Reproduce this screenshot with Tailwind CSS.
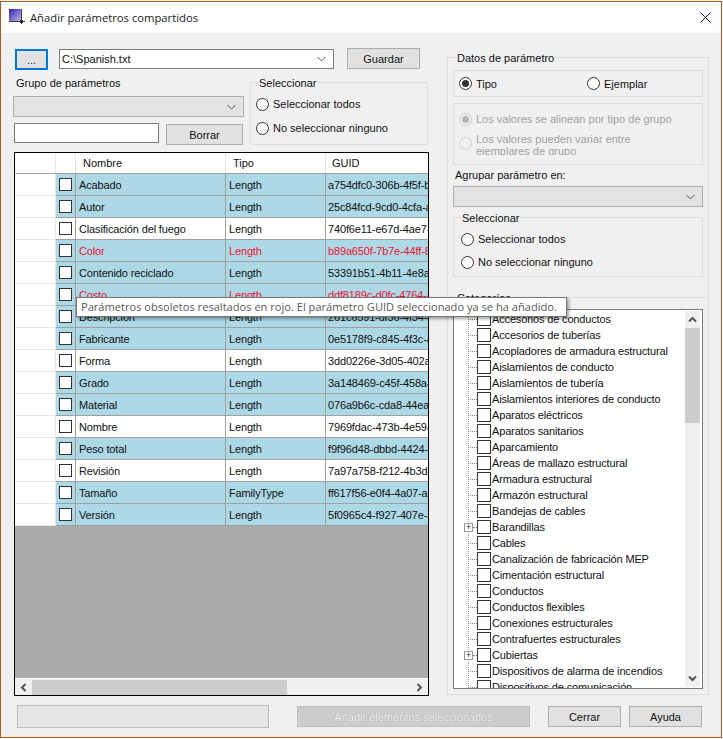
<!DOCTYPE html>
<html lang="es"><head><meta charset="utf-8"><title>Añadir parámetros compartidos</title>
<script src="https://cdn.jsdelivr.net/npm/@tailwindcss/browser@4"></script></head>
<body class="bg-white overflow-hidden">
<div class="relative mt-px w-[722px] h-[737px] border border-[#b5561c] bg-[#f0f0f0] text-[11px] leading-[14px] text-[#111] font-['Liberation_Sans',sans-serif] overflow-hidden">
  <!-- title bar -->
  <div class="h-[31px] bg-white flex items-center pl-[8px] pr-[8px]">
    <svg width="16" height="15" viewBox="0 0 16 15" class="shrink-0 -mt-[2px]"><defs><linearGradient id="g" x1="0" y1="0" x2="1" y2="1"><stop offset="0" stop-color="#2d1fa8"/><stop offset="1" stop-color="#cfc4f5"/></linearGradient></defs><rect x="0" y="0" width="13" height="13" fill="url(#g)"/><path d="M0 12.500H16M12.500 0V15" stroke="#444" stroke-width="1"/><rect x="11" y="11" width="3" height="3" fill="#222"/></svg>
    <span class="ml-[5px] font-['Open_Sans',sans-serif] text-[11.25px] text-[#222]">Añadir parámetros compartidos</span>
    <svg width="11" height="11" viewBox="0 0 11 11" class="ml-auto mr-[2px]"><path d="M0.500 0.500L10.500 10.500M10.500 0.500L0.500 10.500" stroke="#222" stroke-width="1"/></svg>
  </div>
  <div class="flex pt-[16px]">
    <!-- left column -->
    <div class="w-[446px] shrink-0">
      <div class="flex h-[21px] pl-[14px] items-start">
        <div class="w-[33px] h-[21px] border-2 border-[#0078d7] bg-[#e1e1e1] flex justify-center items-center">...</div>
        <div class="ml-[11px] w-[275px] h-[20px] border border-[#7a7a7a] bg-white flex items-center pl-[2px] pr-[7px] justify-between"><span>C:\Spanish.txt</span><svg width="9" height="6" viewBox="0 0 9 6"><path d="M0.500 1L4.500 5L8.500 1" fill="none" stroke="#555"/></svg></div>
        <div class="ml-[13px] -mt-px w-[73px] h-[21px] border border-[#adadad] bg-[#e1e1e1] flex justify-center items-center">Guardar</div>
      </div>
      <div class="flex mt-[12px] pl-[12px] items-start">
        <div class="w-[231px] -mt-[6px]">
          <div class="pl-[3px] h-[15px]">Grupo de parámetros</div>
          <div class="h-[21px] mt-[5px] border border-[#adadad] bg-[#e3e3e3] flex items-center justify-end pr-[7px]"><svg width="9" height="6" viewBox="0 0 9 6"><path d="M0.500 1L4.500 5L8.500 1" fill="none" stroke="#555"/></svg></div>
          <div class="flex mt-[6px] items-start">
            <div class="ml-px w-[145px] h-[20px] border border-[#7a7a7a] bg-white"></div>
            <div class="ml-[7px] mt-px w-[77px] h-[21px] border border-[#adadad] bg-[#e1e1e1] flex justify-center items-center">Borrar</div>
          </div>
        </div>
        <div class="relative ml-[6px] w-[178px] h-[63px] border border-[#dcdcdc]">
          <span class="absolute left-[7px] -top-[7px] bg-[#f0f0f0] px-px">Seleccionar</span>
          <div class="flex items-center pl-[5px] mt-[14px] h-[14px]"><span class="w-[13px] h-[13px] rounded-full border border-[#333] bg-white"></span><span class="ml-[4px]">Seleccionar todos</span></div>
          <div class="flex items-center pl-[5px] mt-[10px] h-[14px]"><span class="w-[13px] h-[13px] rounded-full border border-[#333] bg-white"></span><span class="ml-[4px]">No seleccionar ninguno</span></div>
        </div>
      </div>
      <!-- grid -->
      <div class="ml-[13px] mt-[7px] w-[415px] h-[544px] border border-black flex flex-col bg-[#ababab] overflow-hidden">
        <div class="h-[21px] bg-white grid grid-cols-[40px_20px_150px_100px_102px] shrink-0 border-l border-white border-b border-b-[#a0a0a0] *:flex *:items-center">
          <div class="border-r border-[#e4e4e4]"></div><div class="border-r border-[#e4e4e4]"></div>
          <div class="border-r border-[#e4e4e4] pl-[7px]">Nombre</div><div class="border-r border-[#e4e4e4] pl-[7px]">Tipo</div><div class="pl-[6px]">GUID</div>
        </div>
        <div class="shrink-0 tracking-[-0.15px]">
          <div class="h-[22px] bg-[#add8e6] grid grid-cols-[40px_20px_150px_100px_102px] border-l border-white *:flex *:items-center *:border-b *:border-r *:border-[#a0a0a0] *:overflow-hidden *:whitespace-nowrap"><div class="bg-white !border-[#e6e6e6]"></div><div class="justify-center"><span class="w-[13px] h-[13px] border border-[#333] bg-white shrink-0"></span></div><div class="pl-[3px]">Acabado</div><div class="pl-[3px]">Length</div><div class="pl-[2px] !border-r-0">a754dfc0-306b-4f5f-b</div></div>
          <div class="h-[22px] bg-[#add8e6] grid grid-cols-[40px_20px_150px_100px_102px] border-l border-white *:flex *:items-center *:border-b *:border-r *:border-[#a0a0a0] *:overflow-hidden *:whitespace-nowrap"><div class="bg-white !border-[#e6e6e6]"></div><div class="justify-center"><span class="w-[13px] h-[13px] border border-[#333] bg-white shrink-0"></span></div><div class="pl-[3px]">Autor</div><div class="pl-[3px]">Length</div><div class="pl-[2px] !border-r-0">25c84fcd-9cd0-4cfa-a</div></div>
          <div class="h-[22px] bg-white grid grid-cols-[40px_20px_150px_100px_102px] border-l border-white *:flex *:items-center *:border-b *:border-r *:border-[#a0a0a0] *:overflow-hidden *:whitespace-nowrap"><div class="bg-white !border-[#e6e6e6]"></div><div class="justify-center"><span class="w-[13px] h-[13px] border border-[#333] bg-white shrink-0"></span></div><div class="pl-[3px]">Clasificación del fuego</div><div class="pl-[3px]">Length</div><div class="pl-[2px] !border-r-0">740f6e11-e67d-4ae7-a</div></div>
          <div class="h-[22px] bg-[#add8e6] text-[#f01030] grid grid-cols-[40px_20px_150px_100px_102px] border-l border-white *:flex *:items-center *:border-b *:border-r *:border-[#a0a0a0] *:overflow-hidden *:whitespace-nowrap"><div class="bg-white !border-[#e6e6e6]"></div><div class="justify-center"><span class="w-[13px] h-[13px] border border-[#333] bg-white shrink-0"></span></div><div class="pl-[3px]">Color</div><div class="pl-[3px]">Length</div><div class="pl-[2px] !border-r-0">b89a650f-7b7e-44ff-8</div></div>
          <div class="h-[22px] bg-[#add8e6] grid grid-cols-[40px_20px_150px_100px_102px] border-l border-white *:flex *:items-center *:border-b *:border-r *:border-[#a0a0a0] *:overflow-hidden *:whitespace-nowrap"><div class="bg-white !border-[#e6e6e6]"></div><div class="justify-center"><span class="w-[13px] h-[13px] border border-[#333] bg-white shrink-0"></span></div><div class="pl-[3px]">Contenido reciclado</div><div class="pl-[3px]">Length</div><div class="pl-[2px] !border-r-0">53391b51-4b11-4e8a-a</div></div>
          <div class="h-[22px] bg-[#add8e6] text-[#f01030] grid grid-cols-[40px_20px_150px_100px_102px] border-l border-white *:flex *:items-center *:border-b *:border-r *:border-[#a0a0a0] *:overflow-hidden *:whitespace-nowrap"><div class="bg-white !border-[#e6e6e6]"></div><div class="justify-center"><span class="w-[13px] h-[13px] border border-[#333] bg-white shrink-0"></span></div><div class="pl-[3px]">Costo</div><div class="pl-[3px]">Length</div><div class="pl-[2px] !border-r-0">ddf8189c-d0fc-4764-a</div></div>
          <div class="h-[22px] bg-[#add8e6] grid grid-cols-[40px_20px_150px_100px_102px] border-l border-white *:flex *:items-center *:border-b *:border-r *:border-[#a0a0a0] *:overflow-hidden *:whitespace-nowrap"><div class="bg-white !border-[#e6e6e6]"></div><div class="justify-center"><span class="w-[13px] h-[13px] border border-[#333] bg-white shrink-0"></span></div><div class="pl-[3px]">Descripción</div><div class="pl-[3px]">Length</div><div class="pl-[2px] !border-r-0">261c6591-df36-4f34-a</div></div>
          <div class="h-[22px] bg-[#add8e6] grid grid-cols-[40px_20px_150px_100px_102px] border-l border-white *:flex *:items-center *:border-b *:border-r *:border-[#a0a0a0] *:overflow-hidden *:whitespace-nowrap"><div class="bg-white !border-[#e6e6e6]"></div><div class="justify-center"><span class="w-[13px] h-[13px] border border-[#333] bg-white shrink-0"></span></div><div class="pl-[3px]">Fabricante</div><div class="pl-[3px]">Length</div><div class="pl-[2px] !border-r-0">0e5178f9-c845-4f3c-a</div></div>
          <div class="h-[22px] bg-white grid grid-cols-[40px_20px_150px_100px_102px] border-l border-white *:flex *:items-center *:border-b *:border-r *:border-[#a0a0a0] *:overflow-hidden *:whitespace-nowrap"><div class="bg-white !border-[#e6e6e6]"></div><div class="justify-center"><span class="w-[13px] h-[13px] border border-[#333] bg-white shrink-0"></span></div><div class="pl-[3px]">Forma</div><div class="pl-[3px]">Length</div><div class="pl-[2px] !border-r-0">3dd0226e-3d05-402a-a</div></div>
          <div class="h-[22px] bg-[#add8e6] grid grid-cols-[40px_20px_150px_100px_102px] border-l border-white *:flex *:items-center *:border-b *:border-r *:border-[#a0a0a0] *:overflow-hidden *:whitespace-nowrap"><div class="bg-white !border-[#e6e6e6]"></div><div class="justify-center"><span class="w-[13px] h-[13px] border border-[#333] bg-white shrink-0"></span></div><div class="pl-[3px]">Grado</div><div class="pl-[3px]">Length</div><div class="pl-[2px] !border-r-0">3a148469-c45f-458a-a</div></div>
          <div class="h-[22px] bg-[#add8e6] grid grid-cols-[40px_20px_150px_100px_102px] border-l border-white *:flex *:items-center *:border-b *:border-r *:border-[#a0a0a0] *:overflow-hidden *:whitespace-nowrap"><div class="bg-white !border-[#e6e6e6]"></div><div class="justify-center"><span class="w-[13px] h-[13px] border border-[#333] bg-white shrink-0"></span></div><div class="pl-[3px]">Material</div><div class="pl-[3px]">Length</div><div class="pl-[2px] !border-r-0">076a9b6c-cda8-44ea-a</div></div>
          <div class="h-[22px] bg-white grid grid-cols-[40px_20px_150px_100px_102px] border-l border-white *:flex *:items-center *:border-b *:border-r *:border-[#a0a0a0] *:overflow-hidden *:whitespace-nowrap"><div class="bg-white !border-[#e6e6e6]"></div><div class="justify-center"><span class="w-[13px] h-[13px] border border-[#333] bg-white shrink-0"></span></div><div class="pl-[3px]">Nombre</div><div class="pl-[3px]">Length</div><div class="pl-[2px] !border-r-0">7969fdac-473b-4e59-a</div></div>
          <div class="h-[22px] bg-[#add8e6] grid grid-cols-[40px_20px_150px_100px_102px] border-l border-white *:flex *:items-center *:border-b *:border-r *:border-[#a0a0a0] *:overflow-hidden *:whitespace-nowrap"><div class="bg-white !border-[#e6e6e6]"></div><div class="justify-center"><span class="w-[13px] h-[13px] border border-[#333] bg-white shrink-0"></span></div><div class="pl-[3px]">Peso total</div><div class="pl-[3px]">Length</div><div class="pl-[2px] !border-r-0">f9f96d48-dbbd-4424-a</div></div>
          <div class="h-[22px] bg-white grid grid-cols-[40px_20px_150px_100px_102px] border-l border-white *:flex *:items-center *:border-b *:border-r *:border-[#a0a0a0] *:overflow-hidden *:whitespace-nowrap"><div class="bg-white !border-[#e6e6e6]"></div><div class="justify-center"><span class="w-[13px] h-[13px] border border-[#333] bg-white shrink-0"></span></div><div class="pl-[3px]">Revisión</div><div class="pl-[3px]">Length</div><div class="pl-[2px] !border-r-0">7a97a758-f212-4b3d-a</div></div>
          <div class="h-[22px] bg-[#add8e6] grid grid-cols-[40px_20px_150px_100px_102px] border-l border-white *:flex *:items-center *:border-b *:border-r *:border-[#a0a0a0] *:overflow-hidden *:whitespace-nowrap"><div class="bg-white !border-[#e6e6e6]"></div><div class="justify-center"><span class="w-[13px] h-[13px] border border-[#333] bg-white shrink-0"></span></div><div class="pl-[3px]">Tamaño</div><div class="pl-[3px]">FamilyType</div><div class="pl-[2px] !border-r-0">ff617f56-e0f4-4a07-a</div></div>
          <div class="h-[22px] bg-[#add8e6] grid grid-cols-[40px_20px_150px_100px_102px] border-l border-white *:flex *:items-center *:border-b *:border-r *:border-[#a0a0a0] *:overflow-hidden *:whitespace-nowrap"><div class="bg-white !border-[#e6e6e6]"></div><div class="justify-center"><span class="w-[13px] h-[13px] border border-[#333] bg-white shrink-0"></span></div><div class="pl-[3px]">Versión</div><div class="pl-[3px]">Length</div><div class="pl-[2px] !border-r-0">5f0965c4-f927-407e-a</div></div>
        </div>
        <div class="flex-1"></div>
        <div class="h-[17px] shrink-0 bg-[#f0f0f0] border-t border-white flex items-center">
          <div class="w-[17px] flex justify-center"><svg width="7" height="9" viewBox="0 0 7 9"><path d="M5.500 1L2 4.500L5.500 8" fill="none" stroke="#555" stroke-width="2"/></svg></div>
          <div class="w-[255px] h-[15px] bg-[#cdcdcd]"></div>
          <div class="ml-auto w-[17px] flex justify-center"><svg width="7" height="9" viewBox="0 0 7 9"><path d="M1.500 1L5 4.500L1.500 8" fill="none" stroke="#555" stroke-width="2"/></svg></div>
        </div>
      </div>
    </div>
    <!-- right column -->
    <div class="w-[262px] shrink-0 mt-[8px]">
      <div class="relative h-[240px] border border-[#dcdcdc] border-b-0 px-[5px] pt-[12px]">
        <span class="absolute left-[8px] -top-[7px] bg-[#f0f0f0] px-px">Datos de parámetro</span>
        <div class="h-[27px] border border-[#dcdcdc] flex items-center pl-[5px]"><span class="w-[13px] h-[13px] rounded-full border border-[#333] bg-white flex items-center justify-center"><span class="w-[7px] h-[7px] rounded-full bg-[#333]"></span></span><span class="ml-[4px] w-[20px]">Tipo</span><span class="ml-[91px] w-[13px] h-[13px] rounded-full border border-[#333] bg-white"></span><span class="ml-[4px]">Ejemplar</span></div>
        <div class="mt-[6px] h-[62px] border border-[#dcdcdc] text-[#a0a0a0] pl-[5px] overflow-hidden">
          <div class="flex items-center h-[14px] mt-[8px]"><span class="w-[13px] h-[13px] rounded-full border border-[#cfcfcf] bg-[#f0f0f0] flex items-center justify-center"><span class="w-[7px] h-[7px] rounded-full bg-[#b5b5b5]"></span></span><span class="ml-[4px]">Los valores se alinean por tipo de grupo</span></div>
          <div class="flex items-start mt-[7px] h-[22px]"><span class="mt-[4px] w-[13px] h-[13px] rounded-full border border-[#cfcfcf] bg-[#f0f0f0] shrink-0"></span><span class="ml-[4px] leading-[12px] h-[22px] overflow-hidden">Los valores pueden variar entre<br>ejemplares de grupo</span></div>
        </div>
        <div class="mt-[3px] h-[15px] pl-[2px]">Agrupar parámetro en:</div>
        <div class="mt-[3px] h-[21px] border border-[#adadad] bg-[#e3e3e3] flex items-center justify-end pr-[7px]"><svg width="9" height="6" viewBox="0 0 9 6"><path d="M0.500 1L4.500 5L8.500 1" fill="none" stroke="#555"/></svg></div>
        <div class="relative mt-[10px] h-[60px] border border-[#dcdcdc]">
          <span class="absolute left-[7px] -top-[7px] bg-[#f0f0f0] px-px">Seleccionar</span>
          <div class="flex items-center pl-[7px] mt-[14px] h-[14px]"><span class="w-[13px] h-[13px] rounded-full border border-[#333] bg-white"></span><span class="ml-[4px]">Seleccionar todos</span></div>
          <div class="flex items-center pl-[7px] mt-[9px] h-[14px]"><span class="w-[13px] h-[13px] rounded-full border border-[#333] bg-white"></span><span class="ml-[4px]">No seleccionar ninguno</span></div>
        </div>
      </div>
      <div class="relative border border-[#dcdcdc] h-[398px] px-[5px] pt-[11px]">
        <span class="absolute left-[8px] -top-[7px] bg-[#f0f0f0] px-px">Categorías</span>
        <div class="h-[380px] border border-[#7a7a7a] bg-white flex overflow-hidden">
          <div class="relative flex-1 mt-[1px] overflow-hidden whitespace-nowrap tracking-[-0.15px]">
            <div class="absolute left-[14px] top-0 bottom-0 border-l border-dotted border-[#999]"></div>
            <div class="relative h-[16px] flex items-center"><span class="w-[9px] ml-[14px] border-t border-dotted border-[#888]"></span><span class="w-[14px] h-[14px] border border-[#333]"></span><span class="ml-[1px]">Accesorios de conductos</span></div>
            <div class="relative h-[16px] flex items-center"><span class="w-[9px] ml-[14px] border-t border-dotted border-[#888]"></span><span class="w-[14px] h-[14px] border border-[#333]"></span><span class="ml-[1px]">Accesorios de tuberías</span></div>
            <div class="relative h-[16px] flex items-center"><span class="w-[9px] ml-[14px] border-t border-dotted border-[#888]"></span><span class="w-[14px] h-[14px] border border-[#333]"></span><span class="ml-[1px]">Acopladores de armadura estructural</span></div>
            <div class="relative h-[16px] flex items-center"><span class="w-[9px] ml-[14px] border-t border-dotted border-[#888]"></span><span class="w-[14px] h-[14px] border border-[#333]"></span><span class="ml-[1px]">Aislamientos de conducto</span></div>
            <div class="relative h-[16px] flex items-center"><span class="w-[9px] ml-[14px] border-t border-dotted border-[#888]"></span><span class="w-[14px] h-[14px] border border-[#333]"></span><span class="ml-[1px]">Aislamientos de tubería</span></div>
            <div class="relative h-[16px] flex items-center"><span class="w-[9px] ml-[14px] border-t border-dotted border-[#888]"></span><span class="w-[14px] h-[14px] border border-[#333]"></span><span class="ml-[1px]">Aislamientos interiores de conducto</span></div>
            <div class="relative h-[16px] flex items-center"><span class="w-[9px] ml-[14px] border-t border-dotted border-[#888]"></span><span class="w-[14px] h-[14px] border border-[#333]"></span><span class="ml-[1px]">Aparatos eléctricos</span></div>
            <div class="relative h-[16px] flex items-center"><span class="w-[9px] ml-[14px] border-t border-dotted border-[#888]"></span><span class="w-[14px] h-[14px] border border-[#333]"></span><span class="ml-[1px]">Aparatos sanitarios</span></div>
            <div class="relative h-[16px] flex items-center"><span class="w-[9px] ml-[14px] border-t border-dotted border-[#888]"></span><span class="w-[14px] h-[14px] border border-[#333]"></span><span class="ml-[1px]">Aparcamiento</span></div>
            <div class="relative h-[16px] flex items-center"><span class="w-[9px] ml-[14px] border-t border-dotted border-[#888]"></span><span class="w-[14px] h-[14px] border border-[#333]"></span><span class="ml-[1px]">Áreas de mallazo estructural</span></div>
            <div class="relative h-[16px] flex items-center"><span class="w-[9px] ml-[14px] border-t border-dotted border-[#888]"></span><span class="w-[14px] h-[14px] border border-[#333]"></span><span class="ml-[1px]">Armadura estructural</span></div>
            <div class="relative h-[16px] flex items-center"><span class="w-[9px] ml-[14px] border-t border-dotted border-[#888]"></span><span class="w-[14px] h-[14px] border border-[#333]"></span><span class="ml-[1px]">Armazón estructural</span></div>
            <div class="relative h-[16px] flex items-center"><span class="w-[9px] ml-[14px] border-t border-dotted border-[#888]"></span><span class="w-[14px] h-[14px] border border-[#333]"></span><span class="ml-[1px]">Bandejas de cables</span></div>
            <div class="relative h-[16px] flex items-center"><span class="ml-[10px] w-[9px] h-[9px] border border-[#999] bg-white flex items-center justify-center text-[9px] leading-[7px] text-[#333]">+</span><span class="w-[4px] border-t border-dotted border-[#888]"></span><span class="w-[14px] h-[14px] border border-[#333]"></span><span class="ml-[1px]">Barandillas</span></div>
            <div class="relative h-[16px] flex items-center"><span class="w-[9px] ml-[14px] border-t border-dotted border-[#888]"></span><span class="w-[14px] h-[14px] border border-[#333]"></span><span class="ml-[1px]">Cables</span></div>
            <div class="relative h-[16px] flex items-center"><span class="w-[9px] ml-[14px] border-t border-dotted border-[#888]"></span><span class="w-[14px] h-[14px] border border-[#333]"></span><span class="ml-[1px]">Canalización de fabricación MEP</span></div>
            <div class="relative h-[16px] flex items-center"><span class="w-[9px] ml-[14px] border-t border-dotted border-[#888]"></span><span class="w-[14px] h-[14px] border border-[#333]"></span><span class="ml-[1px]">Cimentación estructural</span></div>
            <div class="relative h-[16px] flex items-center"><span class="w-[9px] ml-[14px] border-t border-dotted border-[#888]"></span><span class="w-[14px] h-[14px] border border-[#333]"></span><span class="ml-[1px]">Conductos</span></div>
            <div class="relative h-[16px] flex items-center"><span class="w-[9px] ml-[14px] border-t border-dotted border-[#888]"></span><span class="w-[14px] h-[14px] border border-[#333]"></span><span class="ml-[1px]">Conductos flexibles</span></div>
            <div class="relative h-[16px] flex items-center"><span class="w-[9px] ml-[14px] border-t border-dotted border-[#888]"></span><span class="w-[14px] h-[14px] border border-[#333]"></span><span class="ml-[1px]">Conexiones estructurales</span></div>
            <div class="relative h-[16px] flex items-center"><span class="w-[9px] ml-[14px] border-t border-dotted border-[#888]"></span><span class="w-[14px] h-[14px] border border-[#333]"></span><span class="ml-[1px]">Contrafuertes estructurales</span></div>
            <div class="relative h-[16px] flex items-center"><span class="ml-[10px] w-[9px] h-[9px] border border-[#999] bg-white flex items-center justify-center text-[9px] leading-[7px] text-[#333]">+</span><span class="w-[4px] border-t border-dotted border-[#888]"></span><span class="w-[14px] h-[14px] border border-[#333]"></span><span class="ml-[1px]">Cubiertas</span></div>
            <div class="relative h-[16px] flex items-center"><span class="w-[9px] ml-[14px] border-t border-dotted border-[#888]"></span><span class="w-[14px] h-[14px] border border-[#333]"></span><span class="ml-[1px]">Dispositivos de alarma de incendios</span></div>
            <div class="relative h-[16px] flex items-center"><span class="w-[9px] ml-[14px] border-t border-dotted border-[#888]"></span><span class="w-[14px] h-[14px] border border-[#333]"></span><span class="ml-[1px]">Dispositivos de comunicación</span></div>
          </div>
          <div class="w-[15px] mr-[2px] mt-[1px] mb-[1px] flex flex-col bg-[#f0f0f0] shrink-0">
            <div class="h-[17px] flex items-center justify-center"><svg width="9" height="7" viewBox="0 0 9 7"><path d="M1 5.500L4.500 2L8 5.500" fill="none" stroke="#555" stroke-width="2"/></svg></div>
            <div class="h-[95px] bg-[#cdcdcd]"></div>
            <div class="mt-auto h-[17px] flex items-center justify-center"><svg width="9" height="7" viewBox="0 0 9 7"><path d="M1 1.500L4.500 5L8 1.500" fill="none" stroke="#555" stroke-width="2"/></svg></div>
          </div>
        </div>
      </div>
    </div>
  </div>
  <!-- bottom bar -->
  <div class="flex items-center pl-[16px] mt-[9px]">
    <div class="w-[252px] h-[23px] border border-[#bcbcbc] bg-[#e6e6e6]"></div>
    <div class="ml-[28px] w-[233px] h-[21px] border border-[#bfbfbf] bg-[#cccccc] flex items-center justify-center text-[#f4f4f4] [text-shadow:0_0_1px_#8a8a8a]">Añadir elementos seleccionados</div>
    <div class="ml-[18px] w-[73px] h-[21px] border border-[#adadad] bg-[#e1e1e1] flex items-center justify-center">Cerrar</div>
    <div class="ml-[8px] w-[73px] h-[21px] border border-[#adadad] bg-[#e1e1e1] flex items-center justify-center">Ayuda</div>
  </div>
  <!-- tooltip -->
  <div class="absolute left-[75px] top-[295px] w-[491px] h-[20px] bg-white border border-[#767676] shadow-[2px_2px_3px_rgba(0,0,0,0.35)] pl-[4px] flex items-center whitespace-nowrap font-['Open_Sans',sans-serif] text-[11.1px] text-[#575757]">Parámetros obsoletos resaltados en rojo. El parámetro GUID seleccionado ya se ha añadido.</div>
</div>
</body></html>
